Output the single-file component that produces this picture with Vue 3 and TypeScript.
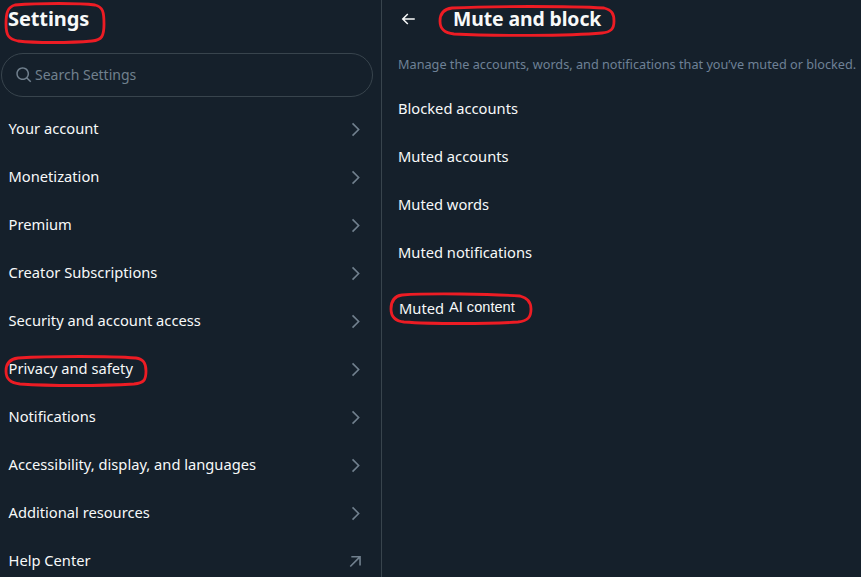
<script setup lang="ts">
interface NavItem { label: string; external?: boolean }
const nav: NavItem[] = [
  { label: 'Your account' },
  { label: 'Monetization' },
  { label: 'Premium' },
  { label: 'Creator Subscriptions' },
  { label: 'Security and account access' },
  { label: 'Privacy and safety' },
  { label: 'Notifications' },
  { label: 'Accessibility, display, and languages' },
  { label: 'Additional resources' },
  { label: 'Help Center', external: true },
]
const muted: string[] = ['Blocked accounts', 'Muted accounts', 'Muted words', 'Muted notifications']
</script>

<template>
  <div class="page">
    <aside class="side">
      <h1 class="side-title">Settings</h1>
      <div class="search">
        <svg class="search-icon" viewBox="0 0 24 24"><path d="M10.25 3.75c-3.59 0-6.5 2.91-6.5 6.5s2.91 6.5 6.5 6.5c1.795 0 3.419-.726 4.596-1.904 1.178-1.177 1.904-2.801 1.904-4.596 0-3.59-2.91-6.5-6.5-6.5zm-8.5 6.5c0-4.694 3.806-8.5 8.5-8.5s8.5 3.806 8.5 8.5c0 1.986-.682 3.815-1.824 5.262l4.781 4.781-1.414 1.414-4.781-4.781c-1.447 1.142-3.276 1.824-5.262 1.824-4.694 0-8.5-3.806-8.5-8.5z"/></svg>
        <span class="search-text">Search Settings</span>
      </div>
      <nav class="nav">
        <div v-for="item in nav" :key="item.label" class="nav-row">
          <span class="label">{{ item.label }}</span>
          <svg v-if="!item.external" class="nav-icon" viewBox="0 0 24 24"><path d="M14.586 12L7.543 4.96l1.414-1.42L17.414 12l-8.457 8.46-1.414-1.42L14.586 12z"/></svg>
          <svg v-else class="nav-icon ext" viewBox="0 0 24 24"><path d="M5.96 17.54L16.5 7H8V5h12v12h-2V8.41L7.37 18.96l-1.41-1.42z"/></svg>
        </div>
      </nav>
    </aside>
    <main class="main">
      <header class="head">
        <svg class="back" viewBox="0 0 24 24"><path d="M7.414 13l5.043 5.04-1.414 1.42L3.586 12l7.457-7.46 1.414 1.42L7.414 11H21v2H7.414z"/></svg>
        <h2 class="main-title">Mute and block</h2>
      </header>
      <p class="desc">Manage the accounts, words, and notifications that you’ve muted or blocked.</p>
      <div class="list">
        <div v-for="m in muted" :key="m" class="list-row"><span class="label">{{ m }}</span></div>
        <div class="list-row edited"><span class="edited-first">Muted</span><span class="pasted">AI content</span></div>
      </div>
    </main>
    <svg class="marks" width="861" height="577" viewBox="0 0 861 577" fill="none">
      <path d="M15 5 C40 3 80 3 95 5 C103 7 104 12 104 24 C104 36 102 40 92 41 C70 43 35 43 18 41 C9 39 6 36 6 24 C6 12 8 7 15 5 Z"/>
      <path d="M452 8 C490 6 570 6 604 8 C612 10 614 14 614 21 C614 29 611 32 602 33 C570 36 490 36 454 34 C444 33 440 29 440 21 C440 13 444 9 452 8 Z"/>
      <path d="M402 295 C430 293 490 294 520 296 C528 298 531 302 531 309 C531 317 528 321 518 322 C490 324 430 324 404 322 C395 321 391 316 391 309 C391 301 395 296 402 295 Z"/>
      <path d="M18 358 C50 356 110 356 136 358 C144 359 146 364 146 371 C146 380 144 383 134 384 C100 386 50 386 20 384 C10 383 6 379 6 371 C6 363 10 359 18 358 Z"/>
    </svg>
  </div>
</template>

<style scoped>
.page {
  position: relative;
  display: flex;
  width: 861px;
  height: 577px;
  overflow: hidden;
  background: #15202b;
  color: #f7f9f9;
  font-family: "Noto Sans", "Open Sans", sans-serif;
  font-size: 14.7px;
}
.label { margin-bottom: 2px; }
.side {
  width: 382px;
  flex: none;
  box-sizing: border-box;
  border-right: 1px solid #38444d;
  height: 577px;
  overflow: hidden;
}
.side-title {
  margin: 0;
  height: 53px;
  box-sizing: border-box;
  padding: 6px 0 0 8px;
  font-size: 20px;
  line-height: 26px;
  font-weight: 700;
  letter-spacing: -0.1px;
}
.search {
  margin: 0 8px 0 1px;
  width: 372px;
  height: 44px;
  box-sizing: border-box;
  border: 1px solid #38444d;
  border-radius: 22px;
  display: flex;
  align-items: center;
  padding-left: 13px;
  gap: 2px;
}
.search-icon { width: 18px; height: 18px; fill: #71808e; }
.search-text { color: #71808e; font-size: 14px; margin-bottom: 2px; }
.nav { margin-top: 8px; }
.nav-row {
  height: 48px;
  display: flex;
  align-items: center;
  justify-content: space-between;
  padding: 0 16px 0 8.5px;
}
.nav-icon { width: 19px; height: 19px; fill: #71808e; }
.ext { margin-right: 1px; }
.main { flex: 1; min-width: 0; }
.head {
  height: 38px;
  display: flex;
  align-items: center;
  padding-left: 17px;
  gap: 36px;
}
.back { width: 18px; height: 18px; fill: #f7f9f9; }
.main-title {
  margin: 0;
  font-size: 19.4px;
  line-height: 26px;
  font-weight: 700;
  letter-spacing: -0.1px;
}
.desc {
  margin: 16px 0 0 16px;
  font-size: 12.7px;
  line-height: 20px;
  color: #6e8196;
  white-space: nowrap;
}
.list { margin-top: 11px; }
.list-row {
  height: 48px;
  display: flex;
  align-items: center;
  padding-left: 16px;
}
.edited { height: 62px; }
.edited-first { position: relative; left: 1px; top: -0.5px; }
.pasted {
  margin-left: 6px;
  font-family: "Liberation Sans", Arial, sans-serif;
  font-size: 14.6px;
  position: relative;
  top: -1px;
}
.marks {
  position: absolute;
  left: 0;
  top: 0;
  pointer-events: none;
}
.marks path { stroke: #ed1c24; stroke-width: 2.8; }
</style>
